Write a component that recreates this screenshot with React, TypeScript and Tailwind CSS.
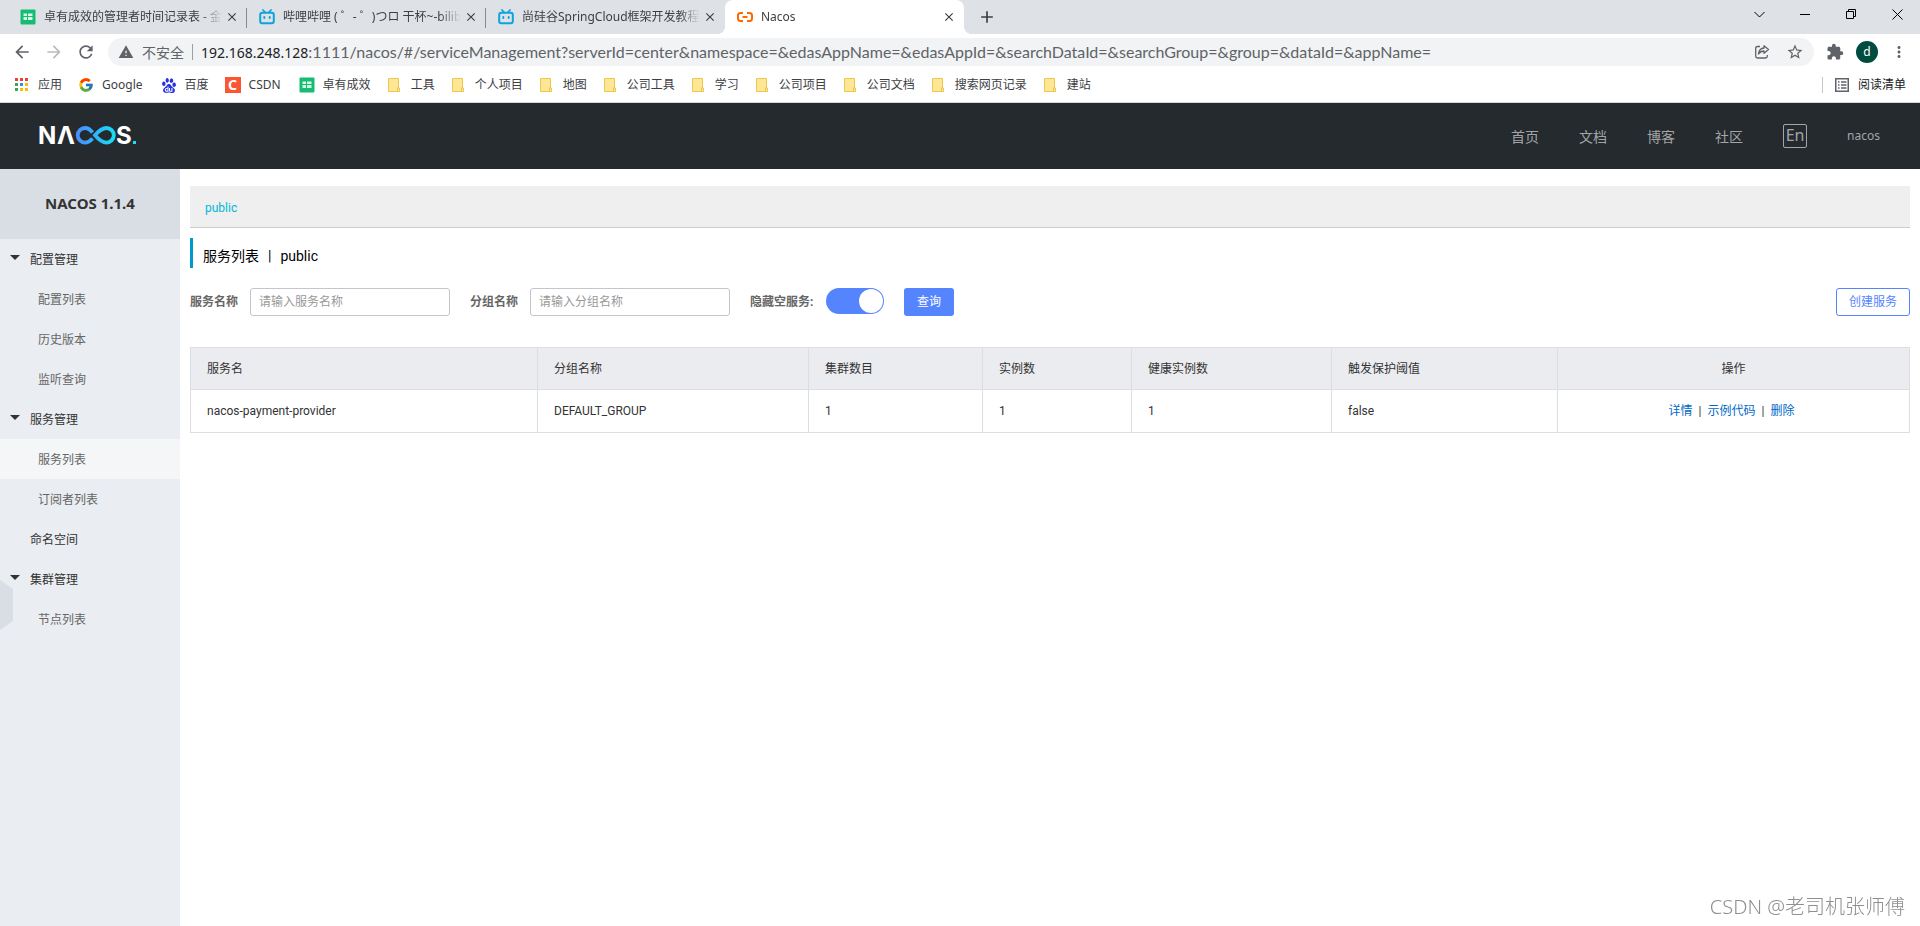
import { useState, ReactNode } from 'react';
import { FcGoogle } from 'react-icons/fc';
import { SiBaidu } from 'react-icons/si';
import {
  MdAdd,
  MdArrowBack,
  MdArrowForward,
  MdClose,
  MdExtension,
  MdMoreVert,
  MdRefresh,
  MdStarBorder,
  MdWarning,
} from 'react-icons/md';

// — favicons

function SheetIcon() {
  return (
    <svg viewBox="0 0 16 16" className="w-4 h-4 shrink-0">
      <rect x="0.5" y="0.5" width="15" height="15" rx="1" fill="#15bd74" />
      <path d="M3.500 4.500h3.500v2.500H3.500zM8 4.500h4.500v2.500H8zM3.500 8h3.500v3H3.500zM8 8h4.500v3H8z" fill="#d9f7e8" />
    </svg>
  );
}

function BiliIcon() {
  return (
    <svg viewBox="0 0 16 16" className="w-4 h-4 shrink-0" fill="none" stroke="#0aa5dc" strokeLinecap="round">
      <rect x="1.200" y="3.700" width="13.600" height="10.600" rx="2" strokeWidth="2" />
      <path d="M4 1l1.800 2M12 1l-1.800 2" strokeWidth="1.700" />
      <path d="M5.300 8v1M10.700 8v1" strokeWidth="1.900" />
    </svg>
  );
}

function AliyunIcon() {
  return (
    <svg viewBox="0 0 16 16" className="w-4 h-4 shrink-0" fill="none" stroke="#ff6a00" strokeWidth="2">
      <path d="M6 4H3.500Q1 4 1 6.500v3Q1 12 3.500 12H6M10 4h2.500Q15 4 15 6.500v3Q15 12 12.500 12H10M5.500 8h5" />
    </svg>
  );
}

function CsdnIcon() {
  return (
    <span className="w-4 h-4 shrink-0 bg-[#fc5531] text-white font-bold text-[14px] leading-4 text-center">C</span>
  );
}

function FolderIcon() {
  return (
    <svg viewBox="0 0 16 16" className="w-4 h-4 shrink-0">
      <path d="M1.500 1.500h10V14.500h-10z" fill="#ffe694" stroke="#e8c84f" />
      <path d="M10.500 11h2v3.500h-2z" fill="#ffe694" stroke="#e8c84f" />
    </svg>
  );
}

const APP_COLORS = ['#ea4335', '#ea4335', '#ea4335', '#34a853', '#4285f4', '#fbbc04', '#34a853', '#fbbc04', '#fbbc04'];

function AppsIcon() {
  return (
    <svg viewBox="0 0 16 16" className="w-4 h-4 shrink-0">
      {APP_COLORS.map((c, i) => (
        <rect key={i} x={1 + (i % 3) * 5} y={1 + Math.floor(i / 3) * 5} width="3" height="3" fill={c} />
      ))}
    </svg>
  );
}

function NacosLogo() {
  return (
    <svg viewBox="-4 -4 102 32" className="w-[102px] h-8" role="img" aria-label="NACOS">
      <defs>
        <linearGradient id="loop" gradientUnits="userSpaceOnUse" x1="36" y1="0" x2="76" y2="0">
          <stop offset="0" stopColor="#4a8bff" />
          <stop offset="1" stopColor="#16e0f5" />
        </linearGradient>
      </defs>
      <g fontFamily="Inter, sans-serif" fontWeight="700" fontSize="24" fill="#fff">
        <text x="-2" y="20">N</text>
        <text x="17" y="20">Λ</text>
        <text x="76" y="20">S</text>
      </g>
      <g fill="none" stroke="url(#loop)" strokeWidth="3.800">
        <path d="M52.500 8.500Q49 4 45 4a7.200 7.200 0 0 0 0 14.600Q49 18.600 52.500 14.500" />
        <path d="M55 11.300C59 6.500 62 4 66.500 4a7.200 7.200 0 0 1 0 14.600C62 18.600 59 16 55 11.300z" />
      </g>
      <rect x="93" y="17" width="3" height="3" fill="#16e0f5" />
    </svg>
  );
}

// — browser tabs

interface Tab {
  title: string;
  icon: ReactNode;
}

const TABS: Tab[] = [
  { title: '卓有成效的管理者时间记录表 - 金', icon: <SheetIcon /> },
  { title: '哔哩哔哩 ( ゜- ゜)つロ 干杯~-bilib', icon: <BiliIcon /> },
  { title: '尚硅谷SpringCloud框架开发教程', icon: <BiliIcon /> },
  { title: 'Nacos', icon: <AliyunIcon /> },
];

const ACTIVE_TAB = 3;

function TabStrip() {
  return (
    <div className="flex h-[34px] bg-[#dee1e6] pl-2">
      {TABS.map((t, i) => (
        <div
          key={t.title}
          className={`relative flex items-center w-[239px] pl-3 pr-[7px] text-[12px] text-[#3c4043] ${
            i === ACTIVE_TAB
              ? 'bg-white rounded-t-lg before:absolute before:bottom-0 before:-left-2 before:w-2 before:h-2 before:bg-[radial-gradient(circle_at_0_0,transparent_8px,white_8px)] after:absolute after:bottom-0 after:-right-2 after:w-2 after:h-2 after:bg-[radial-gradient(circle_at_100%_0,transparent_8px,white_8px)]'
              : ''
          }`}
        >
          {t.icon}
          <span className="flex-1 min-w-0 ml-2 overflow-hidden whitespace-nowrap mask-[linear-gradient(to_right,black_156px,transparent_178px)]">
            {t.title}
          </span>
          <button aria-label="关闭标签页" className="shrink-0 flex items-center justify-center w-4 h-4">
            <MdClose size={14} />
          </button>
          {i < ACTIVE_TAB - 1 && <span className="absolute right-0 top-2 w-px h-5 bg-[#868b90]" />}
        </div>
      ))}
      <button aria-label="新标签页" className="ml-[13px] text-[#3c4043]">
        <MdAdd size={20} />
      </button>
      <div className="ml-auto flex h-7 text-black">
        <WindowButton label="搜索标签页" d="M.5 3l5 5 5-5" />
        <WindowButton label="最小化" d="M0 5.500h10" />
        <WindowButton label="还原" d="M.5 2.500h7v7h-7zM2.500 2.500v-2h7v7h-2" />
        <WindowButton label="关闭" d="M.5.5l10 10M10.500.500l-10 10" />
      </div>
    </div>
  );
}

function WindowButton({ label, d }: { label: string; d: string }) {
  return (
    <button aria-label={label} className="flex items-center justify-center w-[46px]">
      <svg viewBox="0 0 11 11" className="w-[11px] h-[11px]" fill="none" stroke="currentColor">
        <path d={d} />
      </svg>
    </button>
  );
}

function AddressBar() {
  return (
    <div className="flex items-center h-9 px-3 text-[#5f6368]">
      <div className="flex items-center gap-3">
        <button aria-label="返回"><MdArrowBack size={20} /></button>
        <button aria-label="前进" className="text-[#b9bbbe]"><MdArrowForward size={20} /></button>
        <button aria-label="重新加载"><MdRefresh size={20} /></button>
      </div>
      <div className="flex flex-1 min-w-0 items-center h-7 ml-3 px-[10px] rounded-full bg-[#f1f3f4] text-[14px]">
        <MdWarning size={16} className="shrink-0" />
        <span className="ml-2 shrink-0">不安全</span>
        <span className="w-px h-4 mx-2 bg-[#9aa0a6] shrink-0" />
        <div role="textbox" aria-label="地址栏" className="flex-1 min-w-0 overflow-hidden whitespace-nowrap">
          <span className="text-[#202124]">192.168.248.128</span>
          <span className="font-['Lato',sans-serif] text-[16px] leading-5">
            :1111/nacos/#/serviceManagement?serverId=center&amp;namespace=&amp;edasAppName=&amp;edasAppId=&amp;searchDataId=&amp;searchGroup=&amp;group=&amp;dataId=&amp;appName=
          </span>
        </div>
        <button aria-label="分享" className="ml-4">
          <svg viewBox="0 0 16 16" className="w-4 h-4" fill="none" stroke="currentColor" strokeWidth="1.300" strokeLinejoin="round">
            <path d="M6 2.500H3.500Q1.700 2.500 1.700 4.300v7.900Q1.700 14 3.500 14h8q1.800 0 1.800-1.800V11" />
            <path d="M10 1.700L14.500 5.500 10 9.300V7Q6.500 7 4.500 10 5 4.500 10 4z" />
          </svg>
        </button>
        <button aria-label="收藏" className="ml-4"><MdStarBorder size={18} /></button>
      </div>
      <button aria-label="扩展程序" className="ml-3"><MdExtension size={18} /></button>
      <button aria-label="用户" className="w-[22px] h-[22px] ml-3 rounded-full bg-[#004d40] text-white text-[12px] leading-[22px]">
        d
      </button>
      <button aria-label="菜单" className="ml-3"><MdMoreVert size={18} /></button>
    </div>
  );
}

// — bookmarks bar

const BOOKMARKS: Tab[] = [
  { title: '应用', icon: <AppsIcon /> },
  { title: 'Google', icon: <FcGoogle size={16} /> },
  { title: '百度', icon: <SiBaidu size={15} className="w-4 text-[#2932e1]" /> },
  { title: 'CSDN', icon: <CsdnIcon /> },
  { title: '卓有成效', icon: <SheetIcon /> },
  { title: '工具', icon: <FolderIcon /> },
  { title: '个人项目', icon: <FolderIcon /> },
  { title: '地图', icon: <FolderIcon /> },
  { title: '公司工具', icon: <FolderIcon /> },
  { title: '学习', icon: <FolderIcon /> },
  { title: '公司项目', icon: <FolderIcon /> },
  { title: '公司文档', icon: <FolderIcon /> },
  { title: '搜索网页记录', icon: <FolderIcon /> },
  { title: '建站', icon: <FolderIcon /> },
];

function BookmarksBar() {
  return (
    <div className="flex items-center gap-4 h-[33px] px-[14px] pb-[2px] border-b border-[#d5d7da] text-[12px] text-[#3c4043]">
      {BOOKMARKS.map(b => (
        <a
          key={b.title}
          href="#"
          className={`flex items-center gap-2 whitespace-nowrap ${/^[A-Z]/.test(b.title) ? 'pr-[2px]' : ''}`}
        >
          {b.icon}
          {b.title}
        </a>
      ))}
      <a href="#" className="flex items-center gap-2 ml-auto pl-[11px] border-l border-[#c4c7cb] text-[#202124] whitespace-nowrap leading-4">
        <svg viewBox="0 0 16 16" className="w-4 h-4" fill="none" stroke="#5f6368" strokeWidth="1.500">
          <rect x="1.750" y="1.750" width="12.500" height="12.500" />
          <path d="M4 5h1.500M4 8h1.500M4 11h1.500M7 5h5.500M7 8h5.500M7 11h5.500" />
        </svg>
        阅读清单
      </a>
    </div>
  );
}

// — nacos console

interface MenuItem {
  label: string;
  level: 'group' | 'leaf' | 'sub';
}

const MENU: MenuItem[] = [
  { label: '配置管理', level: 'group' },
  { label: '配置列表', level: 'sub' },
  { label: '历史版本', level: 'sub' },
  { label: '监听查询', level: 'sub' },
  { label: '服务管理', level: 'group' },
  { label: '服务列表', level: 'sub' },
  { label: '订阅者列表', level: 'sub' },
  { label: '命名空间', level: 'leaf' },
  { label: '集群管理', level: 'group' },
  { label: '节点列表', level: 'sub' },
];

function Header() {
  return (
    <header className="flex items-center h-[66px] pl-9 pr-10 bg-[#252a2f] text-[#a3a5a7]">
      <a href="#"><NacosLogo /></a>
      <nav className="flex items-center gap-10 ml-auto text-[14px]">
        <a href="#">首页</a>
        <a href="#">文档</a>
        <a href="#">博客</a>
        <a href="#">社区</a>
        <button className="w-6 h-6 border border-[#a3a5a7] rounded-[2px] text-[16px] leading-5 flex justify-center">En</button>
        <a href="#" className="text-[12px]">nacos</a>
      </nav>
    </header>
  );
}

function Sidebar() {
  const [current, setCurrent] = useState<string>('服务列表');

  return (
    <aside className="relative w-[180px] shrink-0 bg-[#eaedf1] text-[12px]">
      <h1 className="h-[70px] leading-[68px] bg-[#d9dde4] text-center text-[15px] font-bold text-[#333] font-['Noto_Sans',sans-serif]">
        NACOS 1.1.4
      </h1>
      <ul>
        {MENU.map(m => (
          <li key={m.label}>
            <a
              href="#"
              onClick={() => setCurrent(m.label)}
              className={`flex items-center h-10 pt-px ${m.level === 'sub' ? 'pl-[38px] text-[#666]' : 'text-[#333]'} ${
                m.level === 'leaf' ? 'pl-[30px]' : ''
              } ${m.label === current ? 'bg-[#f4f6f8]' : ''}`}
            >
              {m.level === 'group' && (
                <svg viewBox="0 0 10 6" className="w-[10px] h-[6px] mx-[10px] mb-[3px]">
                  <path d="M0 0h10L5 5z" fill="#333" />
                </svg>
              )}
              {m.label}
            </a>
          </li>
        ))}
      </ul>
      {/* — collapse handle */}
      <button aria-label="收起菜单" className="absolute left-0 top-[411px]">
        <svg viewBox="0 0 13 50" className="w-[13px] h-[50px]">
          <path d="M0 0l13 9v32L0 50z" fill="#d9dde4" />
        </svg>
      </button>
    </aside>
  );
}

interface Service {
  name: string;
  group: string;
  clusters: number;
  instances: number;
  healthy: number;
  protect: boolean;
}

const SERVICES: Service[] = [
  { name: 'nacos-payment-provider', group: 'DEFAULT_GROUP', clusters: 1, instances: 1, healthy: 1, protect: false },
];

const HEADINGS = ['服务名', '分组名称', '集群数目', '实例数', '健康实例数', '触发保护阈值'];

function SearchForm() {
  const [serviceName, setServiceName] = useState<string>('');
  const [groupName, setGroupName] = useState<string>('');
  const [hideEmpty, setHideEmpty] = useState<boolean>(true);

  const field = 'w-[200px] h-7 px-2 border border-[#c4c6cf] rounded-[3px] placeholder:text-[#999] outline-none';

  return (
    <form className="flex items-center mt-5 text-[12px] text-[#666]" onSubmit={e => e.preventDefault()}>
      <label htmlFor="serviceName" className="w-[60px] font-bold">服务名称</label>
      <input
        id="serviceName"
        value={serviceName}
        onChange={e => setServiceName(e.target.value)}
        placeholder="请输入服务名称"
        className={field}
      />
      <label htmlFor="groupName" className="w-[60px] ml-5 font-bold">分组名称</label>
      <input
        id="groupName"
        value={groupName}
        onChange={e => setGroupName(e.target.value)}
        placeholder="请输入分组名称"
        className={field}
      />
      <label htmlFor="hideEmpty" className="w-[76px] ml-5 font-bold whitespace-nowrap">隐藏空服务:</label>
      <input
        id="hideEmpty"
        type="checkbox"
        checked={hideEmpty}
        onChange={e => setHideEmpty(e.target.checked)}
        className="appearance-none flex w-[58px] h-[26px] mb-[2px] p-px rounded-full bg-[#c4c6cf] checked:bg-[#5584ff] checked:justify-end before:w-6 before:h-6 before:rounded-full before:bg-white"
      />
      <button type="submit" className="w-[50px] h-7 ml-5 rounded-[3px] bg-[#5584ff] text-white">查询</button>
      <button type="button" className="w-[74px] h-7 ml-auto border border-[#5584ff] rounded-[3px] text-[#5584ff]">
        创建服务
      </button>
    </form>
  );
}

function ServiceTable() {
  const cell = 'border border-[#dcdee3] px-4 text-left font-normal';

  return (
    <table className="w-full mt-[31px] table-fixed border-collapse text-[12px] text-[#333]">
      <colgroup>
        <col className="w-[347px]" />
        <col className="w-[271px]" />
        <col className="w-[174px]" />
        <col className="w-[149px]" />
        <col className="w-[200px]" />
        <col className="w-[226px]" />
        <col />
      </colgroup>
      <thead>
        <tr className="h-[42px] bg-[#ebecf0]">
          {HEADINGS.map(h => (
            <th key={h} className={cell}>{h}</th>
          ))}
          <th className="border border-[#dcdee3] px-4 text-center font-normal">操作</th>
        </tr>
      </thead>
      <tbody>
        {SERVICES.map(s => (
          <tr key={s.name} className="h-[43px]">
            <td className={cell}>{s.name}</td>
            <td className={cell}>{s.group}</td>
            <td className={cell}>{s.clusters}</td>
            <td className={cell}>{s.instances}</td>
            <td className={cell}>{s.healthy}</td>
            <td className={cell}>{String(s.protect)}</td>
            <td className="border border-[#dcdee3] pl-4 pr-5 text-center">
              <a href="#" className="text-[#0068c8]">详情</a>
              <span className="mx-[6px]">|</span>
              <a href="#" className="text-[#0068c8]">示例代码</a>
              <span className="mx-[6px]">|</span>
              <a href="#" className="text-[#0068c8]">删除</a>
            </td>
          </tr>
        ))}
      </tbody>
    </table>
  );
}

export default function App() {
  return (
    <div className="flex flex-col min-h-screen bg-white font-['Noto_Sans','Noto_Sans_CJK_SC',sans-serif]">
      <TabStrip />
      <AddressBar />
      <BookmarksBar />
      <Header />
      <div className="flex flex-1 font-['Roboto','Noto_Sans_CJK_SC',sans-serif]">
        <Sidebar />
        <main className="flex-1 min-w-0 px-[10px] pt-[17px]">
          <div className="flex items-center h-[42px] px-[15px] pt-[2px] bg-[#efefef] border-b border-[#ccc] text-[12px]">
            <a href="#" className="text-[#00b7d8]">public</a>
          </div>
          <h2 className="flex items-center h-[30px] mt-[10px] pl-[10px] pt-[6px] border-l-[3px] border-[#09c] text-[14px] text-black">
            <span>服务列表</span>
            <span className="mx-[9px]">|</span>
            <span>public</span>
          </h2>
          <SearchForm />
          <ServiceTable />
        </main>
      </div>
      <div className="fixed right-[15px] bottom-[5px] text-[20px] leading-7 text-[#8f8f8f] font-light">CSDN @老司机张师傅</div>
    </div>
  );
}
